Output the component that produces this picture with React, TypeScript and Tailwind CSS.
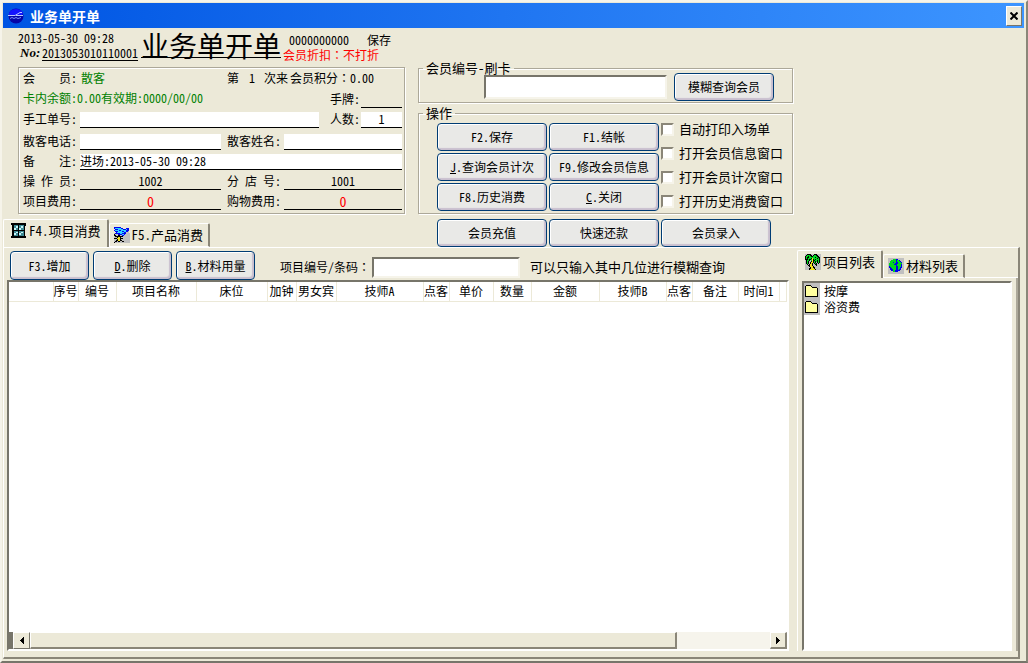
import type { ReactNode } from "react";

function PushButton({ children, className = "" }: { children: ReactNode; className?: string }) {
  return (
    <button
      type="button"
      className={`flex items-center justify-center whitespace-nowrap rounded-[4px] border border-[#003c74] bg-[#e9e9e7] text-xs leading-4 text-black shadow-[inset_1px_1px_0_#ffffff,inset_-2px_-2px_1px_#c9bfcf] ${className}`}
    >
      {children}
    </button>
  );
}

function Field({
  id,
  value = "",
  size = "text-xs",
  className = "",
}: {
  id: string;
  value?: string;
  size?: string;
  className?: string;
}) {
  return (
    <input
      id={id}
      type="text"
      defaultValue={value}
      className={`h-4 min-w-0 rounded-none border-0 border-b border-black p-0 pb-[2px] leading-[13px] outline-none ${size} ${className}`}
    />
  );
}

function FieldLabel({ htmlFor, children }: { htmlFor: string; children: ReactNode }) {
  return (
    <label htmlFor={htmlFor} className="flex w-[57px] shrink-0 whitespace-pre pb-px">
      {children}
    </label>
  );
}

function SpacedLabel({ chars }: { chars: string[] }) {
  return (
    <>
      <span className="flex w-12 justify-between">
        {chars.map((c) => (
          <span key={c}>{c}</span>
        ))}
      </span>
      :
    </>
  );
}

function WideColon() {
  return <span className="font-['Noto_Sans_CJK_TC',sans-serif] leading-none">：</span>;
}

function Option({ label }: { label: string }) {
  return (
    <label className="flex h-6 items-center gap-[5px] whitespace-nowrap text-[13px] leading-4">
      <input
        type="checkbox"
        className="size-[13px] shrink-0 appearance-none border-2 border-b-[#f6f4ea] border-l-[#8a8678] border-r-[#f6f4ea] border-t-[#8a8678] bg-white checked:bg-black"
      />
      {label}
    </label>
  );
}

const palette: Record<string, string> = {
  k: "#000000",
  s: "#c0c0c0",
  b: "#0000f0",
  c: "#30d0ff",
  t: "#3f8a94",
  w: "#c8f4f8",
  g: "#00d820",
  y: "#f0e020",
  f: "#ffffa0",
};

function PixelIcon({ rows }: { rows: string[] }) {
  return (
    <svg viewBox="0 0 16 16" className="size-4 shrink-0" shapeRendering="crispEdges">
      {rows.flatMap((row, y) =>
        [...row].map((c, x) =>
          palette[c] ? <rect key={`${x}-${y}`} x={x} y={y} width="1" height="1" fill={palette[c]} /> : null,
        ),
      )}
    </svg>
  );
}

const windowRows = [
  "kkkkkkkkkkkkkkk.",
  "kkkkkkkkkkkkkkk.",
  ".kkttttktttttkk.",
  ".kkttwwkttwwtk..",
  ".kkttwwkttwwtk..",
  ".kkwwttkwwtttk..",
  ".kkwwttkwwtttk..",
  ".kkkkkkkkkkkkk..",
  ".kkttttktttttk..",
  ".kkttwwkttwwtk..",
  ".kkwwttkwwtttk..",
  ".kkwwttkwwtttk..",
  ".kkttttktttttk..",
  "kkkkkkkkkkkkkkk.",
  "kkkkkkkkkkkkkkk.",
];

const productRows = [
  "bbbbbbb.........",
  "bccccccbb...bbb.",
  ".bbbcccccbbbcbb.",
  "bccccbbcccccbbb.",
  ".bbbccccbbccbbs.",
  "..bcccccccbbsss.",
  "sbbbbbccbbbbssss",
  "ksssbbbbccbsssss",
  "kksskkssbbssssss",
  "skkkkkkkksssssss",
  "ssskyyksssssssss",
  "kkkyyykkksssssss",
  "ssskyyksssssssss",
  "sskkyykkssssssss",
  "skkskksskkssssss",
  "ksssssssssssssss",
];

const palmRows = [
  "sskkkkssskkkssss",
  "skgggkkskggkksss",
  "kggkggkkggggkkss",
  "kgkkggggggkggkks",
  "kgkgggkyggggkgks",
  "kkkgkkgykgkgggks",
  "skggksgykkggkgks",
  "skgksskykgkgkgks",
  "skgkskyykgkskgks",
  "skgkskykskgkskss",
  "sskskyyksskkssss",
  "ssskkyykssskssss",
  "sssskyyyksssssss",
  "ssssskyykkssssss",
  "sssskkyyykssssss",
  "sssskyyyyyksssss",
];

const earthRows = [
  "ssssssssssssssss",
  "sssssgggbbssssss",
  "sssgggggbggbssss",
  "ssggggggbgggbsss",
  "ssgggbggbbgggbss",
  "sggggggbbbggggss",
  "sgggggbbbggggbss",
  "sgggggggbggggbss",
  "sbggggggbbgggbss",
  "sbbgggggbbggbbss",
  "ssbbggggbbggbsss",
  "ssbbbgggbbgbbsss",
  "sssbbggbbbbbssss",
  "sssssggbbbssssss",
  "ssssssssssssssss",
  "ssssssssssssssss",
];

const folderRows = [
  "ssssssssssssssss",
  "ssssssssssssssss",
  "sskkkkksssssssss",
  "skfffffkssssssss",
  "skffffffkkkkksss",
  "skfffffffffffkss",
  "skfffffffffffkss",
  "skfffffffffffkss",
  "skfffffffffffkss",
  "skfffffffffffkss",
  "skfffffffffffkss",
  "skfffffffffffkss",
  "skfffffffffffkss",
  "skkkkkkkkkkkkkss",
  "ssssssssssssssss",
  "ssssssssssssssss",
];

function GlobeIcon() {
  return (
    <svg viewBox="0 0 16 16" className="size-4 shrink-0">
      <circle cx="8" cy="8" r="7.5" fill="#0505a8" />
      <path d="M1 5Q3 1 8 1Q13 1 15 5L14 7H1Z" fill="#1414ff" />
      <path d="M0 7.500H7L12 4.500H14M8 7.500h7" stroke="#b9c8ff" fill="none" />
      <path d="M2 10.500l2-1 2 1 2-1 2 1 3-1" stroke="#7d8fff" fill="none" />
    </svg>
  );
}

function ArrowIcon({ flip = false }: { flip?: boolean }) {
  return (
    <svg viewBox="0 0 8 8" className={flip ? "size-2 rotate-180" : "size-2"} shapeRendering="crispEdges">
      <path d="M2 3.5L6 0v7z" fill="#000" />
    </svg>
  );
}

function Tab({ active = false, icon, children }: { active?: boolean; icon: ReactNode; children: ReactNode }) {
  return (
    <button
      type="button"
      role="tab"
      aria-selected={active}
      className={`flex items-center gap-[2px] whitespace-nowrap rounded-t-[2px] border-l border-r-2 border-t border-l-white border-r-[#8a8678] border-t-white text-[13px] leading-4 ${
        active ? "h-7 pb-[5px] pl-[7px] pr-[6px]" : "h-6 border-b border-b-white pb-px pl-1 pr-[5px]"
      }`}
    >
      {icon}
      {children}
    </button>
  );
}

const columns = [
  { name: "", width: 44 },
  { name: "序号", width: 25 },
  { name: "编号", width: 38 },
  { name: "项目名称", width: 80 },
  { name: "床位", width: 71 },
  { name: "加钟", width: 29 },
  { name: "男女宾", width: 40 },
  { name: "技师A", width: 87 },
  { name: "点客", width: 26 },
  { name: "单价", width: 44 },
  { name: "数量", width: 38 },
  { name: "金额", width: 68 },
  { name: "技师B", width: 67 },
  { name: "点客", width: 26 },
  { name: "备注", width: 46 },
  { name: "时间1", width: 41 },
  { name: "", width: 0 },
];

function Header() {
  return (
    <header className="flex h-9 pl-[15px]">
      <div className="flex w-[123px] flex-col pt-[2px] leading-[15px]">
        <span>2013-05-30 09:28</span>
        <span className="flex whitespace-nowrap pl-[2px]">
          <i className="w-[22px] font-['Liberation_Serif',serif] text-[13px] font-bold">No:</i>
          <u className="underline-offset-2">2013053010110001</u>
        </span>
      </div>
      <h1 className="flex h-[30px] items-center self-start whitespace-nowrap border-b border-black pt-1 text-[28px] font-medium leading-none">
        业务单开单
      </h1>
      <div className="flex flex-col pl-[2px] pt-1">
        <div className="flex gap-[18px] pl-[6px]">
          <span>0000000000</span>
          <span>保存</span>
        </div>
        <span className="-mt-px text-[#ff0000]">会员折扣<WideColon />不打折</span>
      </div>
    </header>
  );
}

function MemberPanel() {
  return (
    <section className="flex w-[387px] flex-col self-start border border-[#aca899] pb-[3px] pl-1 pr-[2px] shadow-[1px_1px_0_#ffffff,inset_1px_1px_0_#ffffff]">
      <div className="flex h-5 items-center">
        <span className="flex w-[58px]">
          <SpacedLabel chars={["会", "员"]} />
        </span>
        <span className="text-[#008000]">散客</span>
        <span className="ml-auto flex pr-7">
          <span className="w-[22px]">第</span>
          <span className="w-[15px]">1</span>
          <span className="w-[26px]">次来</span>
          <span>会员积分<WideColon />0.00</span>
        </span>
      </div>
      <div className="flex h-5 items-end">
        <span className="self-center text-[#008000]">卡内余额:0.00有效期:0000/00/00</span>
        <label htmlFor="tag" className="ml-auto w-[31px] pb-px">手牌:</label>
        <Field id="tag" className="w-[41px] bg-transparent" />
      </div>
      <div className="flex h-5 items-end">
        <FieldLabel htmlFor="manual">手工单号:</FieldLabel>
        <Field id="manual" className="flex-1 bg-white" />
        <label htmlFor="people" className="ml-[11px] w-[31px] pb-px">人数:</label>
        <Field id="people" value="1" className="w-[41px] bg-white text-center" />
      </div>
      <div className="flex h-[22px] items-end">
        <FieldLabel htmlFor="phone">散客电话:</FieldLabel>
        <Field id="phone" className="mr-[6px] w-[141px] bg-white" />
        <FieldLabel htmlFor="guest">散客姓名:</FieldLabel>
        <Field id="guest" className="flex-1 bg-white" />
      </div>
      <div className="flex h-5 items-end">
        <FieldLabel htmlFor="remark">
          <SpacedLabel chars={["备", "注"]} />
        </FieldLabel>
        <Field id="remark" value="进场:2013-05-30 09:28" className="flex-1 bg-white" />
      </div>
      <div className="flex h-5 items-end">
        <FieldLabel htmlFor="operator">
          <SpacedLabel chars={["操", "作", "员"]} />
        </FieldLabel>
        <Field id="operator" value="1002" className="mr-[6px] w-[141px] bg-transparent text-center" />
        <FieldLabel htmlFor="branch">
          <SpacedLabel chars={["分", "店", "号"]} />
        </FieldLabel>
        <Field id="branch" value="1001" className="flex-1 bg-transparent text-center" />
      </div>
      <div className="flex h-5 items-end">
        <FieldLabel htmlFor="itemfee">项目费用:</FieldLabel>
        <Field id="itemfee" value="0" size="text-sm" className="mr-[6px] w-[141px] bg-transparent text-center text-[#ff0000]" />
        <FieldLabel htmlFor="shopfee">购物费用:</FieldLabel>
        <Field id="shopfee" value="0" size="text-sm" className="flex-1 bg-transparent text-center text-[#ff0000]" />
      </div>
    </section>
  );
}

function Actions() {
  const group = "min-w-0 border border-[#aca899] shadow-[1px_1px_0_#ffffff,inset_1px_1px_0_#ffffff]";
  return (
    <div className="flex w-[375px] flex-col">
      <fieldset className={group}>
        <legend className="ml-1 px-[3px] text-[13px] leading-4">会员编号-刷卡</legend>
        <div className="-mt-[3px] flex items-center gap-[7px] pb-px pl-[65px]">
          <input
            type="text"
            aria-label="会员编号"
            className="h-6 w-[183px] border-2 border-b-[#f6f4ea] border-l-[#77756a] border-r-[#f6f4ea] border-t-[#77756a] bg-white px-1 text-xs outline-none"
          />
          <PushButton className="h-7 w-[100px]">模糊查询会员</PushButton>
        </div>
      </fieldset>
      <fieldset className={`mt-[2px] ${group}`}>
        <legend className="ml-1 px-[3px] text-[13px] leading-4">操作</legend>
        <div className="flex items-start gap-[2px] pb-[2px] pl-[18px]">
          <div className="mt-[2px] grid grid-cols-[110px_110px] gap-[2px]">
            <PushButton className="h-7">F2.保存</PushButton>
            <PushButton className="h-7">F1.结帐</PushButton>
            <PushButton className="h-7"><u>J</u>.查询会员计次</PushButton>
            <PushButton className="h-7">F9.修改会员信息</PushButton>
            <PushButton className="h-7">F8.历史消费</PushButton>
            <PushButton className="h-7"><u>C</u>.关闭</PushButton>
          </div>
          <div className="-mb-1 -mt-1 flex flex-col">
            <Option label="自动打印入场单" />
            <Option label="打开会员信息窗口" />
            <Option label="打开会员计次窗口" />
            <Option label="打开历史消费窗口" />
          </div>
        </div>
      </fieldset>
      <div className="mt-[5px] flex gap-[2px] pl-[19px]">
        <PushButton className="h-7 w-[110px]">会员充值</PushButton>
        <PushButton className="h-7 w-[110px]">快速还款</PushButton>
        <PushButton className="h-7 w-[110px]">会员录入</PushButton>
      </div>
    </div>
  );
}

function ItemsPage() {
  return (
    <div className="flex min-w-0 flex-1 flex-col">
      <div className="flex items-center pl-[6px] pt-[3px]">
        <div className="flex gap-1">
          <PushButton className="h-[29px] w-[79px]">F3.增加</PushButton>
          <PushButton className="h-[29px] w-[79px]"><u>D</u>.删除</PushButton>
          <PushButton className="h-[29px] w-[79px]"><u>B</u>.材料用量</PushButton>
        </div>
        <div className="ml-[25px] flex items-center pt-[3px]">
          <label htmlFor="code" className="w-[92px] whitespace-nowrap">项目编号/条码<WideColon /></label>
          <input
            id="code"
            type="text"
            className="h-[21px] w-[148px] border-2 border-b-[#f6f4ea] border-l-[#77756a] border-r-[#f6f4ea] border-t-[#77756a] bg-white px-1 text-xs outline-none"
          />
          <span className="ml-[10px] whitespace-nowrap text-[13px]">可以只输入其中几位进行模糊查询</span>
        </div>
      </div>
      <div className="ml-[3px] flex flex-1 flex-col border-2 border-b-white border-l-[#77756a] border-r-white border-t-[#77756a] bg-white">
        <div className="flex-1 overflow-hidden">
          <table className="w-full table-fixed border-collapse">
            <colgroup>
              {columns.map((c, i) => (
                <col key={i} style={c.width ? { width: c.width } : undefined} />
              ))}
            </colgroup>
            <thead>
              <tr className="h-[19px] border-b border-[#ece9d8]">
                {columns.map((c, i) => (
                  <th key={i} className="whitespace-nowrap border-r border-[#ece9d8] p-0 font-normal leading-4">
                    {c.name}
                  </th>
                ))}
              </tr>
            </thead>
            <tbody />
          </table>
        </div>
        <div className="flex h-[17px] bg-[#f6f4ec]">
          <div className="w-1 bg-[#77756a]" />
          <button type="button" aria-label="向左滚动" className="flex w-[17px] items-center justify-center border border-b-[#77756a] border-l-white border-r-[#77756a] border-t-white bg-[#ece9d8]">
            <ArrowIcon />
          </button>
          <div className="w-[83.2%] border border-b-2 border-r-2 border-b-[#8a8678] border-l-white border-r-[#8a8678] border-t-white bg-[#ece9d8]" />
          <button type="button" aria-label="向右滚动" className="ml-auto flex w-[17px] items-center justify-center border border-b-2 border-r-2 border-b-[#8a8678] border-l-white border-r-[#8a8678] border-t-white bg-[#ece9d8]">
            <ArrowIcon flip />
          </button>
        </div>
      </div>
    </div>
  );
}

function Catalog() {
  return (
    <aside className="flex w-[221px] flex-col pt-[3px]">
      <div role="tablist" className="flex h-[27px] items-end">
        <Tab active icon={<PixelIcon rows={palmRows} />}>项目列表</Tab>
        <Tab icon={<PixelIcon rows={earthRows} />}>材料列表</Tab>
        <div className="flex-1 self-end border-b border-white" />
      </div>
      <div className="flex flex-1 flex-col border-l border-r-2 border-l-white border-r-[#aca899] pl-1 pr-1 pt-[3px]">
        <ul className="flex-1 border-2 border-b-white border-l-[#77756a] border-r-white border-t-[#77756a] bg-white">
          {["按摩", "浴资费"].map((name) => (
            <li key={name} className="flex h-4 items-center gap-1">
              <PixelIcon rows={folderRows} />
              {name}
            </li>
          ))}
        </ul>
      </div>
    </aside>
  );
}

export default function App() {
  return (
    <main className="flex min-h-screen flex-col border-2 border-b-[#77756a] border-l-[#f6f4ea] border-r-[#8a8678] border-t-[#f6f4ea] bg-[#ece9d8] pb-[2px] pl-px pr-[2px] pt-px font-['Noto_Sans_Mono_CJK_SC','Noto_Sans_CJK_SC',sans-serif] text-xs leading-4 text-black">
      <div className="flex h-[25px] items-center bg-linear-to-r from-[#0054e3] to-[#3d95ff] pl-[5px] pr-[2px]">
        <GlobeIcon />
        <span className="ml-[6px] text-sm font-bold leading-none text-white">业务单开单</span>
        <button
          type="button"
          aria-label="关闭"
          className="ml-auto flex h-[20px] w-4 items-center justify-center border border-b-[#77756a] border-l-white border-r-[#77756a] border-t-white bg-[#ece9d8]"
        >
          <svg viewBox="0 0 8 8" className="size-2">
            <path d="M0.5 0.5L7.5 7.5M7.5 0.5L0.5 7.5" stroke="#000" strokeWidth="2" />
          </svg>
        </button>
      </div>
      <div className="flex">
        <div className="flex w-[415px] shrink-0 flex-col">
          <Header />
          <div className="pl-[15px] pt-[3px]">
            <MemberPanel />
          </div>
        </div>
        <div className="pt-8">
          <Actions />
        </div>
      </div>
      <div className="-mt-7 flex h-7 w-[430px] items-end">
        <div role="tablist" className="flex items-end">
          <Tab active icon={<PixelIcon rows={windowRows} />}>F4.项目消费</Tab>
          <Tab icon={<PixelIcon rows={productRows} />}>F5.产品消费</Tab>
        </div>
      </div>
      <div className="mr-1 flex flex-1 gap-2 border-b-2 border-l border-r-2 border-t border-b-[#8a8678] border-l-white border-r-[#8a8678] border-t-white pb-[6px]">
        <ItemsPage />
        <Catalog />
      </div>
    </main>
  );
}
